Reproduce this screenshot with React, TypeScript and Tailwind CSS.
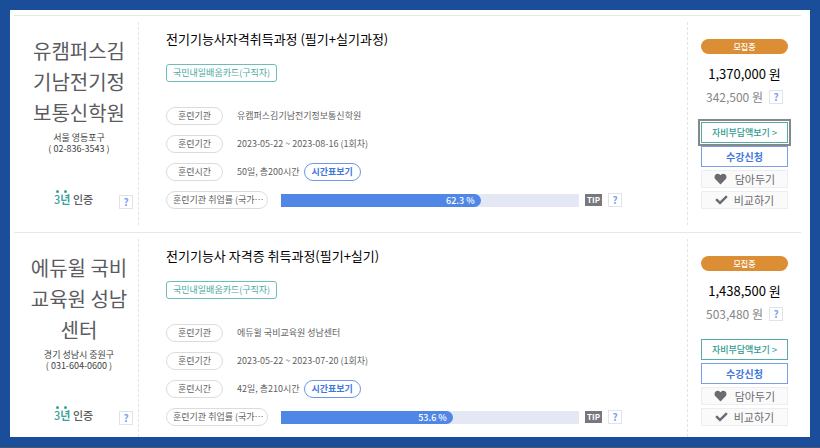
import type React from "react"
import clsx from "clsx"
import { FaCheck, FaHeart } from "react-icons/fa"

interface Course {
  id: string
  academy: string[]
  region: string
  phone: string
  title: string
  fullName: string
  period: string
  hours: string
  rate: number
  price: string
  selfPay: string
  focused?: boolean
}

const courses: Course[] = [
  {
    id: "ucampus",
    academy: ["유캠퍼스김", "기남전기정", "보통신학원"],
    region: "서울 영등포구",
    phone: "( 02-836-3543 )",
    title: "전기기능사자격취득과정 (필기+실기과정)",
    fullName: "유캠퍼스김기남전기정보통신학원",
    period: "2023-05-22 ~ 2023-08-16 (1회차)",
    hours: "50일, 총200시간",
    rate: 62.3,
    price: "1,370,000 원",
    selfPay: "342,500 원",
    focused: true,
  },
  {
    id: "eduwill",
    academy: ["에듀윌 국비", "교육원 성남", "센터"],
    region: "경기 성남시 중원구",
    phone: "( 031-604-0600 )",
    title: "전기기능사 자격증 취득과정(필기+실기)",
    fullName: "에듀윌 국비교육원 성남센터",
    period: "2023-05-22 ~ 2023-07-20 (1회차)",
    hours: "42일, 총210시간",
    rate: 53.6,
    price: "1,438,500 원",
    selfPay: "503,480 원",
  },
]

// the bar is full at this employment rate
const MAX_RATE = 93

function HelpButton() {
  return (
    <button className="flex h-3.5 w-3.5 shrink-0 items-center justify-center border border-[#dfe3ec] bg-white text-[10px] leading-none font-bold text-[#7f9ff0]">
      ?
    </button>
  )
}

function InfoRow({ label, children }: { label: string; children: React.ReactNode }) {
  return (
    <div className="flex h-[18px] items-center">
      <dt className="mr-3.5 flex h-[18px] w-[57px] shrink-0 items-center justify-center rounded-full border border-[#dcdcde] text-[9px] text-[#5f5f62]">
        {label}
      </dt>
      <dd className="flex items-center gap-1 text-[9px] text-[#5f5f62]">{children}</dd>
    </div>
  )
}

function CourseItem({ course }: { course: Course }) {
  return (
    <li className="group flex border-t border-[#e6e8ea] pt-1.5 pb-[7px] last:pb-0">
      <section className="flex w-[125px] shrink-0 flex-col border-r border-dashed border-[#e4e4e6] pt-[13px]">
        <h2 className="pl-1.5 text-center text-[20px] leading-[31px] text-[#5b5b5f]">
          {course.academy.map((line) => (
            <span key={line} className="block">
              {line}
            </span>
          ))}
        </h2>
        <p className="mt-1 pl-1.5 text-center text-[9px] leading-[11px] text-[#3f3f42]">
          {course.region}
          <br />
          {course.phone}
        </p>
        <div className="mt-auto flex items-end justify-between pr-[5px] pb-4 pl-10 group-last:pb-3">
          <p className="mb-[1px] text-[11px] leading-[18px] font-medium text-[#5b5b5f]">
            <span className="relative text-[#3aa39b]">
              3<b className="font-bold">년</b>
              <span className="absolute -top-[1px] left-[2px] h-[3px] w-[3px] rounded-full bg-[#3aa39b]" />
              <span className="absolute -top-[1px] left-[10px] h-[3px] w-[3px] rounded-full bg-[#3aa39b]" />
            </span>{" "}
            인증
          </p>
          <HelpButton />
        </div>
      </section>

      <section className="min-w-0 flex-1 border-r border-dashed border-[#e4e4e6] pt-2 pb-4 pl-[27px] group-last:pb-[11px]">
        <h3 className="text-[13px] leading-[18px] text-black">{course.title}</h3>
        <div className="mt-4 flex">
          <span className="flex h-[18px] items-center rounded-[3px] border border-[#6cbdbb] px-1.5 text-[9px] text-[#4aaaa4]">
            국민내일배움카드(구직자)
          </span>
        </div>
        <dl className="mt-[25px] flex flex-col gap-2.5">
          <InfoRow label="훈련기관">{course.fullName}</InfoRow>
          <InfoRow label="훈련기간">{course.period}</InfoRow>
          <InfoRow label="훈련시간">
            {course.hours}
            <button className="flex h-[18px] w-[57px] items-center justify-center rounded-full border border-[#6d97e8] text-[9px] font-bold text-[#3f78dd]">
              시간표보기
            </button>
          </InfoRow>
          <div className="flex h-[18px] items-center">
            <dt className="mr-[13px] flex h-[18px] w-[102px] shrink-0 items-center rounded-full border border-[#dcdcde] pl-1.5 text-[9px] whitespace-nowrap text-[#5f5f62]">
              훈련기관 취업률 (국가⋯
            </dt>
            <dd className="mr-[65px] flex flex-1 items-center gap-1.5">
              <div className="h-[13px] flex-1 bg-[#e3e8f4]">
                <div
                  className="flex h-full items-center justify-end rounded-r-full bg-[#5086e6] pr-1.5 text-[9px] leading-none font-medium text-white"
                  style={{ width: `${(course.rate / MAX_RATE) * 100}%` }}
                >
                  {course.rate} %
                </div>
              </div>
              <span className="flex h-3 w-[17px] items-center justify-center bg-[#77777e] text-[8px] leading-none font-bold text-white">
                TIP
              </span>
              <HelpButton />
            </dd>
          </div>
        </dl>
      </section>

      <section className="flex w-[113px] shrink-0 flex-col pt-[17px] pr-[13px] pl-[13px]">
        <span className="flex h-[15px] items-center justify-center rounded-full bg-[#dc8e35] text-[8px] leading-none font-medium text-white">
          모집중
        </span>
        <p className="mt-2.5 text-center text-[13px] leading-5 text-black">{course.price}</p>
        <div className="mt-[5px] flex items-center justify-center gap-1.5 text-[12px] leading-4 text-[#85858a]">
          {course.selfPay}
          <HelpButton />
        </div>
        <button
          className={clsx(
            "mt-[17px] flex h-[21px] items-center justify-center border border-[#58aaa4] text-[9px] font-medium text-[#2f9a8f]",
            course.focused && "outline-2 outline-offset-1 outline-[#838a8a]",
          )}
        >
          자비부담액보기 &gt;
        </button>
        <button className="mt-[3px] flex h-[21px] items-center justify-center border border-[#7a9fe6] text-[10px] font-bold text-[#3f78dd]">
          수강신청
        </button>
        <button className="mt-[3px] flex h-[18px] items-center justify-center gap-2 border border-[#eceef2] bg-[#fafafb] text-[11px] text-[#6b6b70]">
          <FaHeart className="h-3 w-[13px]" />
          담아두기
        </button>
        <button className="mt-[3px] flex h-[18px] items-center justify-center gap-1.5 border border-[#eceef2] bg-[#fafafb] text-[11px] text-[#6b6b70]">
          <FaCheck className="h-3 w-[13px]" />
          비교하기
        </button>
      </section>
    </li>
  )
}

export default function App() {
  return (
    <div className="min-h-screen border-b border-[#4b5468] bg-[#1a4e9a] p-2.5 font-['Noto_Sans_CJK_KR',sans-serif]">
      <main className="bg-white pt-[5px] pr-[9px] pl-1">
        <ul>
          {courses.map((course) => (
            <CourseItem key={course.id} course={course} />
          ))}
        </ul>
      </main>
    </div>
  )
}
